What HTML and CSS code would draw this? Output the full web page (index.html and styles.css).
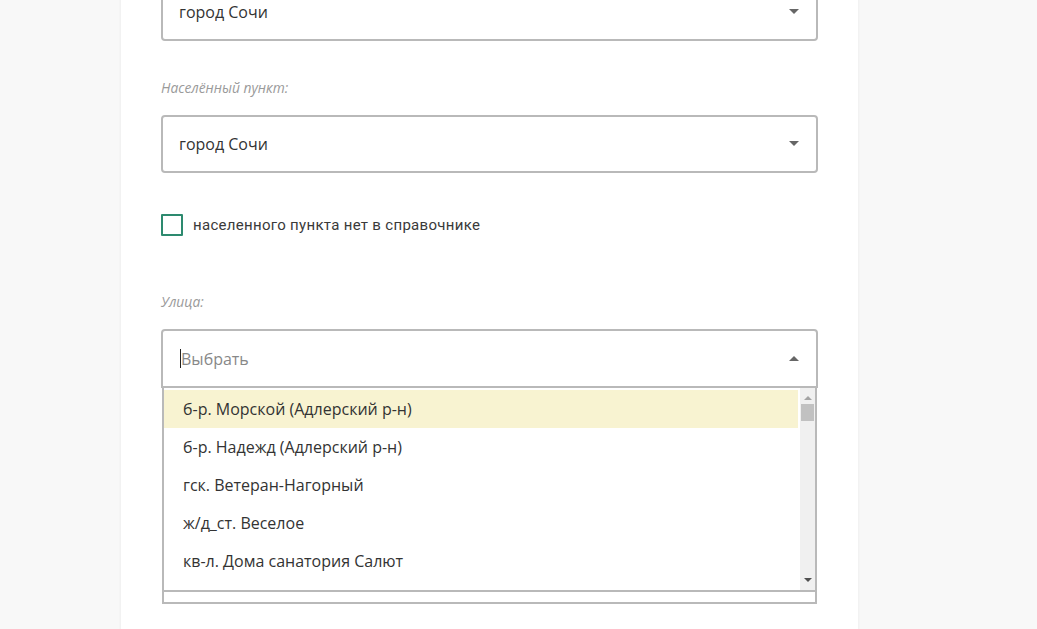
FILE: index.html
```html
<!DOCTYPE html>
<html lang="ru">
<head>
<meta charset="utf-8">
<title>Адрес</title>
<link rel="stylesheet" href="styles.css">
</head>
<body>
<div class="card">
  <div class="select">
    <span class="value">город Сочи</span>
    <span class="arrow down"></span>
  </div>

  <div class="label label-first">Населённый пункт:</div>
  <div class="select">
    <span class="value">город Сочи</span>
    <span class="arrow down"></span>
  </div>

  <label class="check">
    <span class="box"></span>
    <span class="check-text">населенного пункта нет в справочнике</span>
  </label>

  <div class="label label-street">Улица:</div>
  <div class="combo">
    <div class="select open">
      <span class="caret"></span>
      <span class="placeholder">Выбрать</span>
      <span class="arrow up"></span>
    </div>
    <div class="dropdown">
      <div class="list-wrap">
        <ul class="list">
          <li class="item active">б-р. Морской (Адлерский р-н)</li>
          <li class="item">б-р. Надежд (Адлерский р-н)</li>
          <li class="item">гск. Ветеран-Нагорный</li>
          <li class="item">ж/д_ст. Веселое</li>
          <li class="item">кв-л. Дома санатория Салют</li>
        </ul>
        <div class="scrollbar">
          <span class="sb-arrow sb-up"></span>
          <span class="thumb"></span>
          <span class="sb-track"></span>
          <span class="sb-arrow sb-down"></span>
        </div>
      </div>
      <div class="dropdown-foot"></div>
    </div>
  </div>
</div>
</body>
</html>
```

FILE: styles.css
```css
html, body {
  margin: 0;
  padding: 0;
  background: #f8f8f8;
  height: 100%;
  overflow: hidden;
}

body {
  font-family: "Open Sans", "Liberation Sans", sans-serif;
  color: #333;
}

.card {
  width: 737px;
  margin: -30px 0 0 121px;
  padding: 13px 40px 60px 40px;
  box-sizing: border-box;
  background: #fff;
  box-shadow: 0 0 3px rgba(0, 0, 0, 0.07);
  min-height: 700px;
}

.select {
  width: 657px;
  height: 58px;
  box-sizing: border-box;
  border: 2px solid #b9b9b9;
  border-radius: 4px;
  display: flex;
  align-items: center;
  padding: 0 17px 0 16px;
  font-size: 16px;
  background: #fff;
}

.value {
  flex: 1;
  color: #333;
}

.arrow {
  width: 0;
  height: 0;
  border-left: 5px solid transparent;
  border-right: 5px solid transparent;
}

.arrow.down {
  border-top: 5px solid #666;
  margin-top: -1px;
}

.arrow.up {
  border-bottom: 5px solid #666;
  margin-top: -1px;
}

.label {
  font-size: 13.8px;
  font-style: italic;
  color: #9a9a9a;
  line-height: 18px;
}

.label-first {
  margin: 38px 0 18px;
}

.label-street {
  margin: 57px 0 18px;
}

.check {
  display: flex;
  align-items: center;
  margin-top: 41px;
  height: 22px;
}

.box {
  width: 22px;
  height: 22px;
  box-sizing: border-box;
  border: 2px solid #2d8a6f;
  border-radius: 1px;
  margin-right: 10px;
}

.check-text {
  font-family: Roboto, "Liberation Sans", sans-serif;
  font-size: 15px;
  color: #3a3a3a;
  letter-spacing: 0.3px;
}

.combo {
  width: 657px;
}

.select.open {
  height: 59px;
  border-radius: 4px 4px 0 0;
}

.caret {
  width: 1px;
  height: 19px;
  background: #222;
  margin-left: 1px;
}

.placeholder {
  flex: 1;
  color: #888;
}

.dropdown {
  margin: 0 1px;
  border: 2px solid #b9b9b9;
  border-top: none;
  background: #fff;
}

.list-wrap {
  display: flex;
  height: 204px;
  border-bottom: 2px solid #b9b9b9;
  box-sizing: border-box;
}

.list {
  flex: 1;
  list-style: none;
  margin: 0;
  padding: 2px 2px 0 0;
  overflow: hidden;
}

.item {
  height: 38px;
  line-height: 38px;
  padding-left: 19px;
  font-size: 16px;
  color: #333;
  white-space: nowrap;
}

.item.active {
  background: #f8f3d1;
}

.scrollbar {
  width: 15px;
  background: #f0f0f0;
  display: flex;
  flex-direction: column;
  align-items: center;
}

.sb-arrow {
  width: 0;
  height: 0;
  border-left: 4px solid transparent;
  border-right: 4px solid transparent;
}

.sb-up {
  border-bottom: 4px solid #a3a3a3;
  margin-top: 8px;
}

.sb-down {
  border-top: 4px solid #505050;
  margin-bottom: 8px;
}

.thumb {
  width: 13px;
  height: 17px;
  background: #c1c1c1;
  margin-top: 4px;
}

.sb-track {
  flex: 1;
}

.dropdown-foot {
  height: 10px;
}
```
